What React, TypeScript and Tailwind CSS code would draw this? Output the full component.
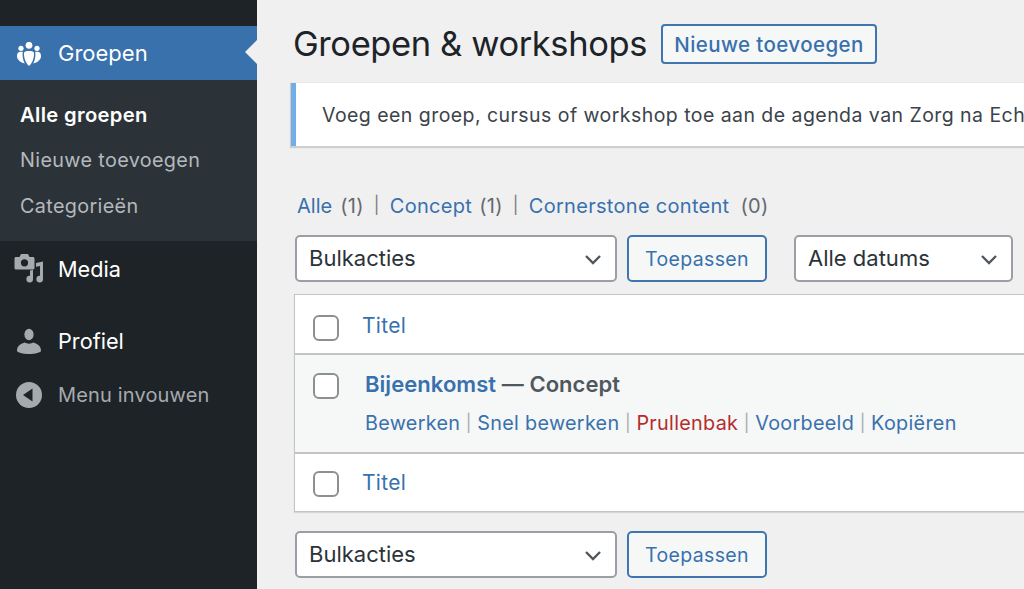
import React from 'react';

const font = { fontFamily: 'Inter, "Noto Sans", sans-serif' };

const Chevron = () => (
  <svg width="20" height="20" viewBox="0 0 20 20" fill="none" stroke="#50575e" strokeWidth="2.4" className="shrink-0">
    <path d="M3 7l7 7 7-7" />
  </svg>
);

const Select = ({ label, width }: { label: string; width: string }) => (
  <div className={`${width} h-[47px] shrink-0 flex items-center justify-between pl-[12px] pr-[12px] bg-white border-2 border-[#9a9fa5] rounded-[5px] text-[22px] text-[#2c3338]`}>
    <span>{label}</span>
    <Chevron />
  </div>
);

const ApplyButton = () => (
  <button className="w-[140px] h-[47px] pt-[2px] shrink-0 border-2 border-[#3f76b0] rounded-[5px] bg-[#f6f7f7] text-[#3871ad] text-[19.5px] tracking-[0.35px]">
    Toepassen
  </button>
);

const Checkbox = ({ className = '' }: { className?: string }) => (
  <span className={`block w-[26px] h-[26px] bg-white border-2 border-[#8c8f94] rounded-[6px] shrink-0 ${className}`} />
);

const Sep = ({ className = 'text-[#a7aaad]' }: { className?: string }) => (
  <span className={`text-[17px] ${className}`}>|</span>
);

const TitleRow = ({ className, boxClass }: { className: string; boxClass: string }) => (
  <div className={`flex items-center pl-[18px] gap-[23px] bg-white ${className}`}>
    <Checkbox className={boxClass} />
    <span className="text-[21px] tracking-[0.3px] text-[#3871ad]">Titel</span>
  </div>
);

export default function App() {
  return (
    <div className="flex w-[1024px] h-[589px] overflow-hidden bg-[#f0f0f1]" style={font}>
      {/* Sidebar */}
      <aside className="w-[257px] shrink-0 bg-[#1d2327] text-white flex flex-col">
        <div className="h-[26px]" />
        <div className="relative h-[54px] bg-[#3871ab] flex items-center pl-[17px] gap-[17px]">
          <svg width="24" height="24" viewBox="0 0 24 24" fill="white" className="shrink-0 mt-[2px]">
            <circle cx="12" cy="3.3" r="3.4" />
            <circle cx="4" cy="6.3" r="2.6" />
            <circle cx="20" cy="6.3" r="2.6" />
            <path d="M7.2 10.200C8.500 8.600 15.500 8.600 16.800 10.200 17.500 13 16.500 20 12 24 7.500 20 6.500 13 7.200 10.200z" />
            <path d="M.8 11C1.500 9.800 4 9.500 5.800 9.800 5.200 13.500 5.800 18 7.800 21.500 3.500 20.500 0 17.500 0 14.500 0 13 .2 12 .8 11z" />
            <path d="M23.200 11C22.500 9.800 20 9.500 18.200 9.800 18.800 13.500 18.200 18 16.200 21.500 20.500 20.500 24 17.500 24 14.500 24 13 23.800 12 23.200 11z" />
          </svg>
          <span className="text-[22px]">Groepen</span>
          <span className="absolute right-0 top-[14px] border-y-[12px] border-y-transparent border-r-[12px] border-r-[#f0f0f1]" />
        </div>
        <div className="h-[161px] bg-[#2c3338] pl-[20px] pt-[22px] flex flex-col gap-[21px] text-[19.8px] leading-[25px] tracking-[0.35px] text-[#b4b9be]">
          <span className="font-semibold text-[20.2px] text-white">Alle groepen</span>
          <span>Nieuwe toevoegen</span>
          <span>Categorieën</span>
        </div>
        <div className="h-[56px] flex items-center pl-[14px] gap-[14px]">
          <svg width="30" height="30" viewBox="0 0 30 30" fill="#a7aaad" className="shrink-0">
            <path fillRule="evenodd" d="M7 0h7l1.500 3H19c.8 0 1.500.7 1.500 1.500V14c0 .8-.7 1.500-1.500 1.500H2c-.8 0-1.500-.7-1.500-1.500V4.500C.5 3.700 1.200 3 2 3h3.500zM10.500 5.200a3.600 3.600 0 100 7.200 3.600 3.600 0 000-7.200z" />
            <path d="M22 9l7-1.500V25a3.300 3.300 0 11-3-3.200V12l-4 .8z" />
            <path d="M16 16.500l3-.6V25a3.300 3.300 0 11-3-3.200z" />
          </svg>
          <span className="text-[21.7px]">Media</span>
        </div>
        <div className="h-[88px] flex items-center pl-[17px] gap-[17px]">
          <svg width="24" height="26" viewBox="0 0 24 26" fill="#a7aaad" className="shrink-0">
            <ellipse cx="12" cy="6.500" rx="4.600" ry="5.800" />
            <path d="M0 23c0-5 3-7 8-8.500 1.500 1.500 6.500 1.500 8 0 5 1.500 8 3.500 8 8.500 0 1.500-6 3-12 3S0 24.500 0 23z" />
          </svg>
          <span className="text-[21.7px]">Profiel</span>
        </div>
        <div className="h-[18px] mt-[1px] flex items-center pl-[16px] gap-[16px]">
          <svg width="26" height="26" viewBox="0 0 26 26" className="shrink-0">
            <circle cx="13" cy="13" r="13" fill="#a7aaad" />
            <path d="M16.500 6.500v13L7 13z" fill="#1d2327" />
          </svg>
          <span className="text-[20px] tracking-[0.15px] text-[#a7aaad]">Menu invouwen</span>
        </div>
      </aside>

      {/* Main */}
      <main className="flex-1 min-w-0 overflow-hidden pl-[37px]">
        <div className="flex items-center h-[40px] mt-[24px] -ml-[1px] gap-[14px] whitespace-nowrap">
          <h1 className="text-[34.5px] text-[#1d2327] leading-[40px] tracking-[-0.4px]">Groepen &amp; workshops</h1>
          <button className="w-[216px] h-[40px] pt-[2px] shrink-0 border-2 border-[#3f76b0] rounded-[4px] bg-[#f6f7f7] text-[#3871ad] text-[20.5px] font-medium tracking-[0.4px]">
            Nieuwe toevoegen
          </button>
        </div>

        <div className="mt-[19px] -ml-[3px] w-[800px] h-[63px] bg-white border-l-[5px] border-l-[#72aee6] shadow-[0_1px_1px_1px_rgba(0,0,0,0.14)] flex items-center pl-[26px] pt-[2px] whitespace-nowrap text-[19.5px] tracking-[0.45px] text-[#3c434a]">
          Voeg een groep, cursus of workshop toe aan de agenda van Zorg na Echtscheiding
        </div>

        <div className="mt-[47px] h-[26px] pl-[3px] flex items-center whitespace-nowrap text-[20px] tracking-[0.3px] text-[#646970]">
          <span className="text-[#3871ad] tracking-[0px]">Alle</span>
          <span className="ml-[8px]">(1)</span>
          <Sep className="mx-[10px] text-[#787c82]" />
          <span className="text-[#3871ad]">Concept</span>
          <span className="ml-[7px]">(1)</span>
          <Sep className="mx-[10px] text-[#787c82]" />
          <span className="text-[#3871ad]">Cornerstone content</span>
          <span className="ml-[11px]">(0)</span>
        </div>

        <div className="mt-[16px] ml-[1px] flex items-center">
          <Select label="Bulkacties" width="w-[322px]" />
          <span className="w-[10px] shrink-0" />
          <ApplyButton />
          <span className="w-[27px] shrink-0" />
          <Select label="Alle datums" width="w-[219px]" />
        </div>

        <div className="mt-[12px] w-[760px] h-[218px] border border-[#c3c4c7] shadow-[0_1px_1px_rgba(0,0,0,0.1)] flex flex-col">
          <TitleRow className="h-[60px] pt-[4px] border-b-2 border-b-[#c3c4c7]" boxClass="mt-[4px]" />
          <div className="h-[97px] bg-[#f6f7f7] pl-[18px] flex">
            <div className="pt-[18px]">
              <Checkbox />
            </div>
            <div className="pl-[26px]">
              <div className="pt-[16px] h-[55px] text-[22px] leading-[26px] tracking-[0.05px] font-semibold whitespace-nowrap text-[#50575e]">
                <span className="text-[#3871ad]">Bijeenkomst</span> — Concept
              </div>
              <div className="flex items-center gap-[5.5px] h-[28px] text-[19.8px] tracking-[0.3px] whitespace-nowrap text-[#3871ad]">
                <span>Bewerken</span>
                <Sep />
                <span>Snel bewerken</span>
                <Sep />
                <span className="text-[#b32d2e]">Prullenbak</span>
                <Sep />
                <span>Voorbeeld</span>
                <Sep />
                <span>Kopiëren</span>
              </div>
            </div>
          </div>
          <TitleRow className="h-[59px] border-t-2 border-t-[#c3c4c7]" boxClass="mt-[2px]" />
        </div>

        <div className="mt-[19px] ml-[1px] flex items-center">
          <Select label="Bulkacties" width="w-[322px]" />
          <span className="w-[10px] shrink-0" />
          <ApplyButton />
        </div>
      </main>
    </div>
  );
}
